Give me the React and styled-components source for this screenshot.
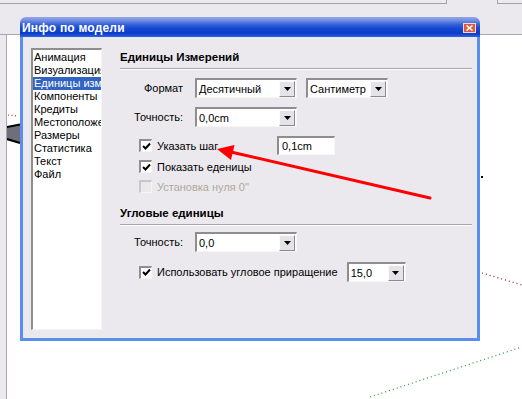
import React from 'react';
import styled, { createGlobalStyle } from 'styled-components';

const Global = createGlobalStyle`
  html, body { margin: 0; padding: 0; background: #fff; }
  body { font-family: "Liberation Sans", Arial, sans-serif; }
`;

const FONT = `"Liberation Sans", Arial, sans-serif`;

const Screen = styled.div`
  position: relative;
  width: 522px;
  height: 399px;
  overflow: hidden;
  display: flex;
  flex-direction: column;
  background: #fff;
  font-family: ${FONT};
`;

const TopBar = styled.div`
  flex: none;
  height: 35px;
  box-sizing: border-box;
  background: #ece9ee;
  border-bottom: 1px solid #a9a8ad;
  display: flex;
  align-items: flex-start;
`;

const ToolStrip = styled.div`
  height: 3px;
  width: ${(p) => p.$w}px;
  flex: ${(p) => (p.$grow ? 1 : 'none')};
  margin-left: ${(p) => p.$ml || 0}px;
  border-bottom: 1px solid #a3a2a6;
  border-left: ${(p) => (p.$left ? '1px solid #a3a2a6' : 'none')};
  border-right: ${(p) => (p.$right ? '1px solid #a3a2a6' : 'none')};
`;

const Main = styled.div`
  flex: 1;
  display: flex;
`;

const LeftBar = styled.div`
  flex: none;
  width: 6px;
  background: #ece9ee;
  border-right: 1px solid #a9a8ad;
`;

const Canvas = styled.div`
  flex: 1;
  position: relative;
  background: #fff;
`;

const CanvasArt = styled.svg`
  position: absolute;
  left: 0;
  top: 0;
  display: block;
`;

const Overlay = styled.svg`
  position: absolute;
  left: 0;
  top: 0;
  pointer-events: none;
  display: block;
`;

const Window = styled.div`
  position: absolute;
  left: 20px;
  top: 17px;
  width: 460px;
  height: 324px;
  display: flex;
  flex-direction: column;
`;

const TitleBar = styled.div`
  flex: none;
  height: 20px;
  box-sizing: border-box;
  border-radius: 6px 6px 0 0;
  background: linear-gradient(
    to bottom,
    #93a8e8 0%,
    #6f8ce2 18%,
    #3560d8 38%,
    #1447d2 58%,
    #0a3ccb 82%,
    #2f63e2 100%
  );
  display: flex;
  align-items: center;
  justify-content: space-between;
  padding: 2px 4px 0 2px;
`;

const Title = styled.span`
  color: #fff;
  font: bold 12px ${FONT};
  letter-spacing: 0.2px;
`;

const CloseBtn = styled.div`
  width: 13px;
  height: 10px;
  box-sizing: border-box;
  background: #dc5a3e;
  border: 1px solid #f3d6d6;
  display: flex;
  align-items: center;
  justify-content: center;
`;

const Body = styled.div`
  flex: 1;
  display: flex;
  gap: 18px;
  background: #ece9ee;
  border: 3px solid #5a8ff0;
  border-top: none;
  padding: 11px 5px 8px 8px;
`;

const ListBox = styled.div`
  flex: none;
  width: 71px;
  box-sizing: border-box;
  background: #fff;
  border-style: solid;
  border-width: 2px 1px 1px 2px;
  border-color: #8e8d92 #f4f4f4 #f4f4f4 #8e8d92;
  padding: 1px 0 0 0;
  overflow: hidden;
`;

const ListItem = styled.div`
  height: 13px;
  line-height: 13px;
  padding-left: 1px;
  font-size: 11px;
  white-space: nowrap;
  overflow: hidden;
  color: ${(p) => (p.$selected ? '#fff' : '#000')};
  background: ${(p) => (p.$selected ? '#3163c0' : 'transparent')};
`;

const Panel = styled.div`
  flex: 1;
  display: flex;
  flex-direction: column;
`;

const SectionTitle = styled.div`
  height: 14px;
  line-height: 14px;
  margin-top: ${(p) => p.$mt}px;
  font-weight: bold;
  font-size: 11.5px;
  color: #000;
`;

const Separator = styled.div`
  margin-top: 4px;
  border-top: 1px solid #a5a4a8;
  border-bottom: 1px solid #fff;
`;

const FieldRow = styled.div`
  display: flex;
  align-items: center;
  height: 20px;
  margin-top: ${(p) => p.$mt}px;
`;

const FieldLabel = styled.span`
  width: 63px;
  margin-right: 12px;
  text-align: right;
  font-size: 11px;
  color: #000;
  white-space: nowrap;
`;

const Combo = styled.div`
  width: ${(p) => p.$w}px;
  height: 20px;
  margin-left: ${(p) => p.$ml || 0}px;
  box-sizing: border-box;
  background: #fff;
  border-style: solid;
  border-width: 2px 1px 1px 2px;
  border-color: #8e8d92 #f6f6f6 #f6f6f6 #8e8d92;
  display: flex;
  align-items: center;
  justify-content: space-between;
  padding-right: 1px;
`;

const ComboText = styled.span`
  padding-left: 2px;
  font-size: 11px;
  color: #000;
  white-space: nowrap;
`;

const DropBtn = styled.div`
  width: 16px;
  height: 16px;
  box-sizing: border-box;
  background: #e4e3e7;
  border-style: solid;
  border-width: 1px;
  border-color: #fbfbfb #8a898e #8a898e #fbfbfb;
  display: flex;
  align-items: center;
  justify-content: center;
`;

const TextBox = styled.div`
  width: ${(p) => p.$w}px;
  height: 19px;
  box-sizing: border-box;
  background: #fff;
  border-style: solid;
  border-width: 2px 1px 1px 2px;
  border-color: #8e8d92 #f6f6f6 #f6f6f6 #8e8d92;
  padding-left: 3px;
  font-size: 11px;
  line-height: 16px;
  color: #000;
`;

const CheckRow = styled.div`
  display: flex;
  align-items: center;
  height: ${(p) => p.$h}px;
  margin-top: ${(p) => p.$mt}px;
  padding-left: 19px;
`;

const CheckBox = styled.div`
  flex: none;
  width: 13px;
  height: 13px;
  box-sizing: border-box;
  background: ${(p) => (p.$disabled ? '#ece9ee' : '#fff')};
  border-style: solid;
  border-width: 2px 1px 1px 2px;
  border-color: ${(p) =>
    p.$disabled ? '#c9c7cc #f4f4f4 #f4f4f4 #c9c7cc' : '#8e8d92 #f4f4f4 #f4f4f4 #8e8d92'};
  display: flex;
  align-items: center;
  justify-content: center;
`;

const CheckLabel = styled.span`
  margin-left: 5px;
  width: ${(p) => (p.$w ? `${p.$w}px` : 'auto')};
  margin-right: ${(p) => p.$mr || 0}px;
  font-size: 11px;
  white-space: nowrap;
  color: ${(p) => (p.$disabled ? '#aca899' : '#000')};
`;

const Arrow = () => (
  <svg width="7" height="4" viewBox="0 0 7 4">
    <polygon points="0,0 7,0 3.5,4" fill="#000" />
  </svg>
);

const Tick = () => (
  <svg width="9" height="9" viewBox="0 0 9 9">
    <polyline points="1,4 3.5,6.5 8,1.5" fill="none" stroke="#000" strokeWidth="2" />
  </svg>
);

const ComboBox = ({ w, ml, value }) => (
  <Combo $w={w} $ml={ml}>
    <ComboText>{value}</ComboText>
    <DropBtn>
      <Arrow />
    </DropBtn>
  </Combo>
);

const items = [
  'Анимация',
  'Визуализация',
  'Единицы измерений',
  'Компоненты',
  'Кредиты',
  'Местоположение',
  'Размеры',
  'Статистика',
  'Текст',
  'Файл',
];

export default function App() {
  return (
    <>
      <Global />
      <Screen>
        <TopBar>
          <ToolStrip $w={446} $right />
          <ToolStrip $grow $ml={50} $left />
        </TopBar>
        <Main>
          <LeftBar />
          <Canvas>
            <CanvasArt width="515" height="364" viewBox="7 35 515 364">
              <line x1="8" y1="115" x2="18" y2="116" stroke="#c03030" strokeWidth="1.2" strokeDasharray="1 2.5" />
              <polygon points="7,127 20,125 20,143 7,139" fill="#6f6f7c" />
              <line x1="7" y1="127" x2="20" y2="124.5" stroke="#000" strokeWidth="2.2" />
              <line x1="7" y1="139" x2="20" y2="143" stroke="#000" strokeWidth="2.2" />
              <line x1="482" y1="273" x2="522" y2="285" stroke="#8a1c2a" strokeWidth="1.2" strokeDasharray="1 3" />
              <line x1="370" y1="397" x2="522" y2="347" stroke="#1f9a2a" strokeWidth="1.2" strokeDasharray="1 3" />
              <rect x="481" y="176" width="2" height="2" fill="#000" />
            </CanvasArt>
          </Canvas>
        </Main>

        <Window>
          <TitleBar>
            <Title>Инфо по модели</Title>
            <CloseBtn>
              <svg width="7" height="6" viewBox="0 0 7 6">
                <path d="M0.5 0.5 L6.5 5.5 M6.5 0.5 L0.5 5.5" stroke="#fff" strokeWidth="1.6" />
              </svg>
            </CloseBtn>
          </TitleBar>
          <Body>
            <ListBox>
              {items.map((it, i) => (
                <ListItem key={it} $selected={i === 2}>
                  {it}
                </ListItem>
              ))}
            </ListBox>
            <Panel>
              <SectionTitle $mt={2}>Единицы Измерений</SectionTitle>
              <Separator />
              <FieldRow $mt={8}>
                <FieldLabel>Формат</FieldLabel>
                <ComboBox w={102} value="Десятичный" />
                <ComboBox w={82} ml={9} value="Сантиметр" />
              </FieldRow>
              <FieldRow $mt={9}>
                <FieldLabel>Точность:</FieldLabel>
                <ComboBox w={102} value="0,0cm" />
              </FieldRow>
              <CheckRow $h={19} $mt={9}>
                <CheckBox>
                  <Tick />
                </CheckBox>
                <CheckLabel $w={120}>Указать шаг</CheckLabel>
                <TextBox $w={58}>0,1cm</TextBox>
              </CheckRow>
              <CheckRow $h={13} $mt={5}>
                <CheckBox>
                  <Tick />
                </CheckBox>
                <CheckLabel>Показать еденицы</CheckLabel>
              </CheckRow>
              <CheckRow $h={13} $mt={7}>
                <CheckBox $disabled />
                <CheckLabel $disabled>Установка нуля 0"</CheckLabel>
              </CheckRow>
              <SectionTitle $mt={13}>Угловые единицы</SectionTitle>
              <Separator />
              <FieldRow $mt={6}>
                <FieldLabel>Точность:</FieldLabel>
                <ComboBox w={102} value="0,0" />
              </FieldRow>
              <CheckRow $h={20} $mt={10}>
                <CheckBox>
                  <Tick />
                </CheckBox>
                <CheckLabel $mr={9}>Использовать угловое приращение</CheckLabel>
                <ComboBox w={59} value="15,0" />
              </CheckRow>
            </Panel>
          </Body>
        </Window>

        <Overlay width="522" height="399" viewBox="0 0 522 399">
          <line x1="430" y1="198" x2="231" y2="152" stroke="#ff0000" strokeWidth="3" strokeLinecap="round" />
          <polygon points="217,149 234.5,145 231,160" fill="#ff0000" />
        </Overlay>
      </Screen>
    </>
  );
}
